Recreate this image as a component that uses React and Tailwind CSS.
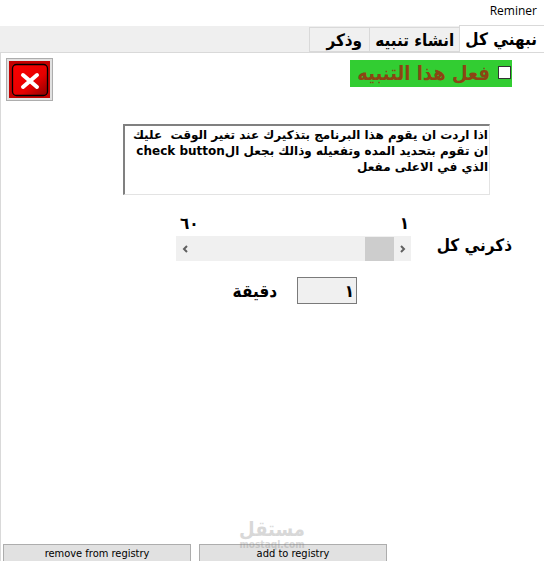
import { useState } from 'react';

const tabs = ['نبهني كل', 'انشاء تنبيه', 'وذكر'];

const helpText = [
  'اذا اردت ان يقوم هذا البرنامج بتذكيرك عند تغير الوقت  عليك',
  'ان تقوم بتحديد المده وتفعيله وذالك بجعل الcheck button',
  'الذي في الاعلى مفعل',
].join('\n');

const toArabicDigits = (n) => String(n).replace(/\d/g, (d) => '٠١٢٣٤٥٦٧٨٩'[d]);

const CloseIcon = () => (
  <svg className="w-full h-full" viewBox="0 0 41 37" preserveAspectRatio="none">
    <defs>
      <linearGradient id="closeFill" x1="0" y1="0" x2="1" y2="1">
        <stop offset="0" stopColor="#fb0000" />
        <stop offset="0.6" stopColor="#e60000" />
        <stop offset="1" stopColor="#8a0000" />
      </linearGradient>
    </defs>
    <rect width="41" height="37" fill="#c40000" />
    <rect x="3.5" y="3.5" width="35" height="31" rx="4" fill="url(#closeFill)" stroke="#000" strokeWidth="1.3" />
    <path d="M14 14l14 12M28 14L14 26" stroke="#fff" strokeWidth="4" strokeLinecap="round" />
  </svg>
);

const Tab = ({ label, active, onClick }) => (
  <button
    type="button"
    role="tab"
    aria-selected={active}
    onClick={onClick}
    className={
      active
        ? 'h-[27px] ps-[7px] pe-[5px] bg-white border-e border-t border-[#d9d9d9]'
        : 'h-[25px] ps-[5px] last:ps-[7px] pe-[5px] last:pe-4 bg-[#f0f0f0] border-e border-t border-b border-[#d9d9d9]'
    }
  >
    {label}
  </button>
);

const ArrowButton = ({ label, onClick, d }) => (
  <button type="button" aria-label={label} onClick={onClick} className="w-[17px] flex items-center justify-center">
    <svg className="w-2 h-2" viewBox="0 0 8 8" fill="none" stroke="#606060" strokeWidth="2">
      <path d={d} />
    </svg>
  </button>
);

const RegistryButton = ({ children }) => (
  <button
    type="button"
    className="flex-1 max-w-[188px] h-6 pb-1 bg-[#e1e1e1] border border-[#adadad] text-[11px] leading-4 font-normal"
  >
    {children}
  </button>
);

export default function App() {
  const [activeTab, setActiveTab] = useState(0);
  const [enabled, setEnabled] = useState(false);
  const [minutes, setMinutes] = useState(1);

  const step = (by) => setMinutes((m) => Math.min(60, Math.max(1, m + by)));

  return (
    <div
      dir="rtl"
      className="relative h-screen overflow-hidden flex flex-col bg-white text-black font-bold [font-family:'DejaVu_Sans_Condensed','DejaVu_Sans',sans-serif]"
    >
      <header className="h-[26px] shrink-0 px-[7px] pt-[3px] text-xs font-normal [font-family:'Open_Sans',sans-serif]">
        Reminer
      </header>

      <nav role="tablist" className="h-[26px] shrink-0 flex items-end bg-[#efefef] text-[17px] leading-6">
        {tabs.map((label, i) => (
          <Tab key={label} label={label} active={i === activeTab} onClick={() => setActiveTab(i)} />
        ))}
      </nav>

      <main className="flex-1 min-h-0 flex flex-col bg-white border-t border-l border-[#d9d9d9]">
        <div className="flex justify-between items-start ps-8 pe-[5px] pt-[5px]">
          <label className="mt-0.5 h-[27px] ps-px flex items-center gap-2 pe-[7px] pb-0.5 bg-[#32cd32] text-[#8b4513] text-xl leading-6">
            <input
              type="checkbox"
              checked={enabled}
              onChange={(e) => setEnabled(e.target.checked)}
              className="appearance-none w-[13px] h-[13px] bg-white border border-[#333] checked:bg-[#333]"
            />
            فعل هذا التنبيه
          </label>
          <button type="button" aria-label="اغلاق" className="w-[47px] h-[43px] p-0.5 bg-[#e1e1e1] border border-[#adadad]">
            <CloseIcon />
          </button>
        </div>

        <div className="flex mt-[23px] ps-[54px] pe-[122px]">
          <textarea
            readOnly
            aria-label="شرح"
            value={helpText}
            className="flex-1 h-[71px] px-px pt-px resize-none overflow-hidden whitespace-pre text-xs leading-4 [font-family:'DejaVu_Sans',sans-serif] border border-[#e3e3e3] border-t-2 border-t-[#808080] border-l-2 border-l-[#808080] outline-none"
          />
        </div>

        <div className="flex items-end mt-4 ps-8 pe-[175px]">
          <label htmlFor="interval" className="w-[101px] pb-1 text-[17px] leading-6 whitespace-nowrap">
            ذكرني كل
          </label>
          <div className="flex-1">
            <div className="h-[25px] px-0.5 flex justify-between text-[17px] leading-6">
              <span>١</span>
              <span className="pe-0.5">٦٠</span>
            </div>
            <div className="h-[25px] flex bg-[#f0f0f0]">
              <ArrowButton label="انقاص" onClick={() => step(-1)} d="M2 1l3 3-3 3" />
              <input
                id="interval"
                type="range"
                min="1"
                max="60"
                value={minutes}
                onChange={(e) => setMinutes(Number(e.target.value))}
                className="flex-1 min-w-0 appearance-none bg-transparent [&::-webkit-slider-thumb]:appearance-none [&::-webkit-slider-thumb]:w-[29px] [&::-webkit-slider-thumb]:h-6 [&::-webkit-slider-thumb]:bg-[#cdcdcd]"
              />
              <ArrowButton label="زيادة" onClick={() => step(1)} d="M6 1L3 4l3 3" />
            </div>
          </div>
        </div>

        <div className="flex items-center gap-5 mt-4 ps-[187px]">
          <input
            id="minutes"
            type="text"
            readOnly
            value={toArabicDigits(minutes)}
            className="w-[60px] h-[27px] px-0.5 bg-[#f0f0f0] border border-[#7a7a7a] text-[17px] leading-6 outline-none"
          />
          <label htmlFor="minutes" className="text-[17px] leading-6">
            دقيقة
          </label>
        </div>

        <footer dir="ltr" className="mt-auto -mb-[7px] flex gap-2 ps-0.5">
          <RegistryButton>remove from registry</RegistryButton>
          <RegistryButton>add to registry</RegistryButton>
        </footer>
      </main>

      {/* watermark */}
      <div className="absolute inset-x-0 bottom-3 flex flex-col items-center text-[#808080] opacity-30 pointer-events-none">
        <span className="text-xl leading-6">مستقل</span>
        <span className="text-[10px] leading-2">mostaql.com</span>
      </div>
    </div>
  );
}
